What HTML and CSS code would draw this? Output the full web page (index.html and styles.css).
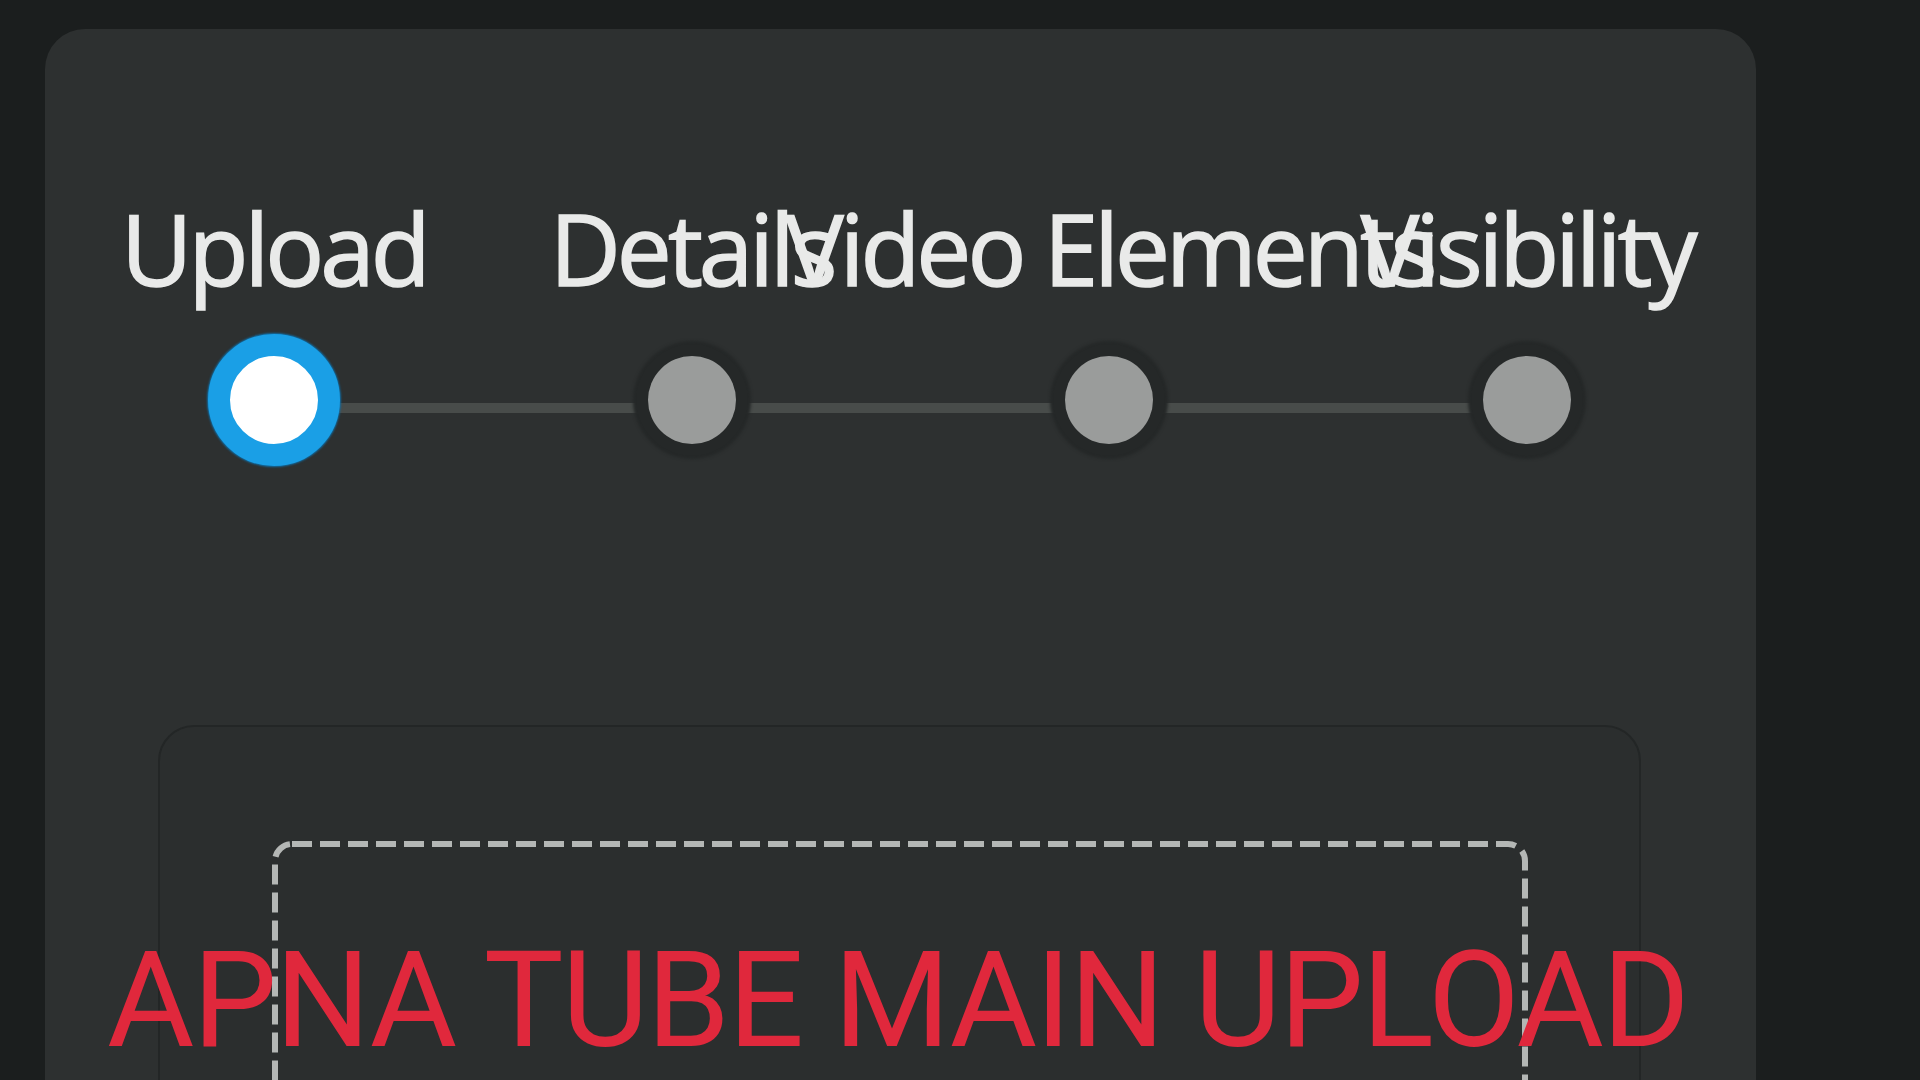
FILE: index.html
```html
<!DOCTYPE html>
<html lang="en">
<head>
<meta charset="utf-8">
<title>Apna Tube Upload</title>
<link rel="stylesheet" href="styles.css">
</head>
<body>
<div class="screen">
  <div class="panel">
    <div class="stepper">
      <div class="step">
        <div class="step-label">Upload</div>
        <div class="dot-wrap"><div class="dot active"></div></div>
      </div>
      <div class="step">
        <div class="step-label">Details</div>
        <div class="dot-wrap"><div class="dot"></div></div>
      </div>
      <div class="step">
        <div class="step-label">Video Elements</div>
        <div class="dot-wrap"><div class="dot"></div></div>
      </div>
      <div class="step">
        <div class="step-label">Visibility</div>
        <div class="dot-wrap"><div class="dot"></div></div>
      </div>
    </div>
    <div class="card">
      <svg class="dropzone" width="1256" height="420" viewBox="0 0 1256 420">
        <rect x="3" y="3" width="1250" height="414" rx="17" ry="17"></rect>
      </svg>
    </div>
  </div>
  <div class="watermark">APNA TUBE MAIN UPLOAD</div>
</div>
</body>
</html>
```

FILE: styles.css
```css
html, body {
  margin: 0;
  height: 100%;
  overflow: hidden;
  background: #1b1e1e;
}

body {
  font-family: "Open Sans", "Noto Sans", sans-serif;
}

.screen {
  position: relative;
  height: 100%;
  box-sizing: border-box;
  padding: 29px 164px 0 45px;
}

.panel {
  height: 100%;
  box-sizing: border-box;
  background: #2d3030;
  border-radius: 40px 40px 0 0;
  padding: 170px 20px 0;
}

.stepper {
  position: relative;
  display: flex;
}

.stepper::before {
  content: "";
  position: absolute;
  left: 12.5%;
  right: 12.5%;
  top: 204px;
  height: 10px;
  background: #484c4a;
}

.step {
  flex: 1;
  min-width: 0;
  display: flex;
  flex-direction: column;
  align-items: center;
}

.step-label {
  font-size: 98px;
  line-height: 98px;
  font-weight: 400;
  letter-spacing: -4px;
  color: #e9eae9;
  -webkit-text-stroke: 1.5px #e9eae9;
  white-space: nowrap;
}

.dot-wrap {
  position: relative;
  z-index: 1;
  margin-top: 37px;
  height: 132px;
  display: flex;
  align-items: center;
  justify-content: center;
}

.dot {
  width: 88px;
  height: 88px;
  border-radius: 50%;
  background: #9a9c9b;
  box-shadow: 0 0 3px 15px #252828;
}

.dot.active {
  background: #ffffff;
  border: 22px solid #1a9fe6;
  box-shadow: 0 0 2px 1px #0f6fa8;
}

.card {
  margin: 259px 95px 0 93px;
  height: 600px;
  box-sizing: border-box;
  background: #2b2e2e;
  border: 2px solid #232626;
  border-radius: 36px;
  padding: 114px 111px 0 112px;
}

.dropzone {
  display: block;
}

.dropzone rect {
  fill: none;
  stroke: #b4b7b5;
  stroke-width: 6;
  stroke-dasharray: 20 8;
}

.watermark {
  position: absolute;
  left: 107px;
  top: 934px;
  font-family: Roboto, "Liberation Sans", sans-serif;
  font-size: 134px;
  line-height: 134px;
  letter-spacing: -2px;
  color: #e0283c;
  white-space: nowrap;
}
```
